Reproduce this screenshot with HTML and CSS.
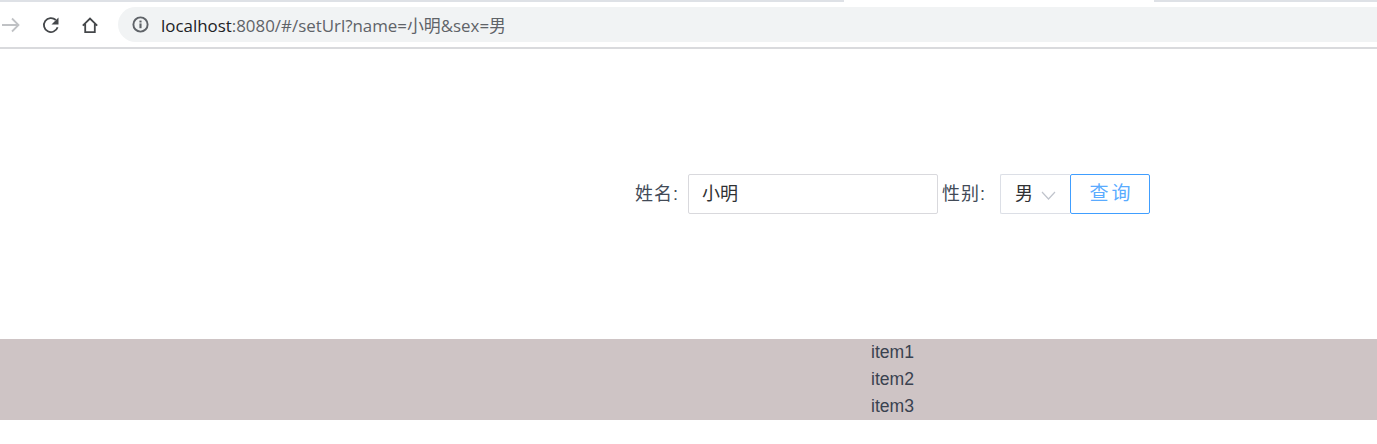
FILE: index.html
```html
<!DOCTYPE html>
<html lang="zh">
<head>
<meta charset="utf-8">
<title>setUrl</title>
<link rel="stylesheet" href="styles.css">
</head>
<body>
<header class="browser">
  <div class="tabstrip">
    <div class="tab-rest tab-left"></div>
    <div class="tab-active"></div>
    <div class="tab-rest tab-right"></div>
  </div>
  <div class="toolbar">
    <svg class="icon icon-forward" width="20" height="20" viewBox="0 0 20 20"><path d="M1 10h16M11 3.500l6.500 6.500-6.500 6.500" fill="none" stroke="#c0c2c5" stroke-width="1.800"/></svg>
    <svg class="icon icon-reload" width="20" height="20" viewBox="0 0 20 20"><path d="M16.600 12.200A7 7 0 1 1 14.800 5" fill="none" stroke="#44474a" stroke-width="1.800"/><path d="M17.500 2.500v7h-7z" fill="#44474a"/></svg>
    <svg class="icon icon-home" width="20" height="20" viewBox="0 0 20 20"><path d="M2.800 10.600 10 3.600l7.200 7M5.200 9v8.200h9.600V9" fill="none" stroke="#44474a" stroke-width="1.800"/></svg>
    <div class="omnibox">
      <svg class="icon icon-info" width="17" height="17" viewBox="0 0 16 16"><circle cx="8" cy="8" r="6.700" fill="none" stroke="#5f6368" stroke-width="1.800"/><rect x="7" y="7" width="2" height="4.500" fill="#5f6368"/><rect x="7" y="4.300" width="2" height="1.800" fill="#5f6368"/></svg>
      <span class="url"><span class="url-host">localhost</span>:8080/#/setUrl?name=小明&amp;sex=男</span>
    </div>
  </div>
  <div class="toolbar-line"></div>
</header>
<main class="page">
  <form class="search">
    <label class="field-label label-name">姓名:</label>
    <div class="input">小明</div>
    <label class="field-label label-sex">性别:</label>
    <div class="select">
      <span>男</span>
      <svg class="chevron" width="15" height="9" viewBox="0 0 15 9"><path d="M1 1l6.500 7 6.500-7" fill="none" stroke="#c0c4cc" stroke-width="1.200"/></svg>
    </div>
    <button class="query" type="button">查询</button>
  </form>
  <ul class="items">
    <li>item1</li>
    <li>item2</li>
    <li>item3</li>
  </ul>
</main>
</body>
</html>
```
FILE: styles.css
```css
html, body {
  margin: 0;
  padding: 0;
  background: #fff;
  overflow: hidden;
}
body {
  width: 1377px;
  height: 444px;
  font-family: "Liberation Sans", "Noto Sans CJK SC", sans-serif;
  color: #303133;
}
.browser {
  height: 49px;
  display: flex;
  flex-direction: column;
}
.tabstrip {
  display: flex;
  height: 2px;
}
.tab-rest {
  background: #dee1e6;
}
.tab-left { width: 844px; }
.tab-active { width: 310px; background: #fff; }
.tab-right { flex: 1; }
.toolbar {
  height: 35px;
  margin-top: 5px;
  display: flex;
  align-items: center;
}
.icon { display: block; flex: none; }
.icon-forward { margin-left: 1px; }
.icon-reload { margin-left: 20px; }
.icon-home { margin-left: 19px; }
.omnibox {
  margin-left: 18px;
  flex: 1;
  height: 35px;
  background: #f1f3f4;
  border-radius: 17.5px 0 0 17.5px;
  display: flex;
  align-items: center;
  padding-left: 14px;
}
.url {
  margin-left: 12px;
  font-family: "Open Sans", "Noto Sans CJK SC", sans-serif;
  font-size: 16.9px;
  color: #5f6368;
  white-space: nowrap;
}
.url-host { color: #202124; }
.toolbar-line {
  margin-top: 5px;
  height: 2px;
  background: #d9dadd;
}
.page {
  display: flex;
  flex-direction: column;
}
.search {
  height: 290px;
  box-sizing: border-box;
  padding: 125px 0 0 635px;
  display: flex;
  align-items: flex-start;
  font-size: 18px;
}
.field-label {
  height: 40px;
  line-height: 40px;
  color: #424a57;
  letter-spacing: 1px;
  white-space: nowrap;
}
.label-name { width: 53px; }
.label-sex { width: 58px; margin-left: 4px; }
.input {
  width: 250px;
  height: 40px;
  box-sizing: border-box;
  border: 1px solid #d9d9dd;
  border-radius: 2px;
  padding-left: 13px;
  line-height: 38px;
  color: #303133;
}
.select {
  width: 70px;
  height: 40px;
  box-sizing: border-box;
  border: 1px solid #dcdfe6;
  border-radius: 2px 0 0 2px;
  border-right: 0;
  padding-left: 14px;
  display: flex;
  align-items: center;
  line-height: 38px;
}
.chevron { margin-left: 8px; margin-top: 2px; }
.query {
  width: 80px;
  height: 40px;
  box-sizing: border-box;
  padding: 0 0 0 3px;
  background: #fff;
  border: 1px solid #409eff;
  border-radius: 2px;
  color: #5aabff;
  font-family: inherit;
  font-size: 19px;
  letter-spacing: 3px;
  line-height: 36px;
}
.items {
  list-style: none;
  margin: 0;
  padding: 0 0 0 871px;
  background: #cec4c5;
  font-size: 17.6px;
  color: #3a4250;
}
.items li {
  height: 27px;
  line-height: 27px;
}
```
